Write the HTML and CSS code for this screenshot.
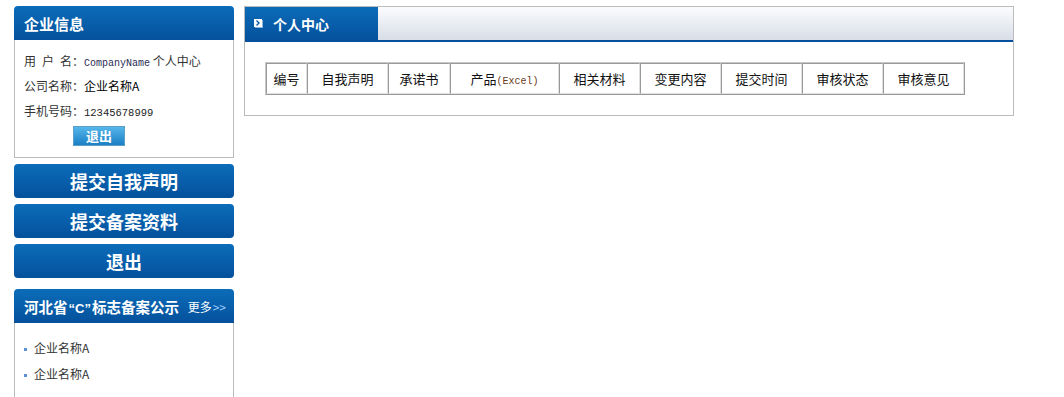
FILE: index.html
```html
<!DOCTYPE html>
<html lang="zh-CN">
<head>
    <meta charset="UTF-8">
    <title>个人中心</title>
    <link rel="stylesheet" href="styles.css">
</head>
<body>

<div class="wrap">
    <div class="sidebar">
        <div class="box-title">企业信息</div>
        <div class="info-box">
            <div class="info-row">用&ensp;户&ensp;名：<span class="mono">CompanyName</span>&nbsp;个人中心</div>
            <div class="info-row">公司名称：<span class="dark">企业名称A</span></div>
            <div class="info-row">手机号码：<span class="num">12345678999</span></div>
            <div class="info-btn"><a href="#" class="small-btn">退出</a></div>
        </div>

        <a href="#" class="side-btn">提交自我声明</a>
        <a href="#" class="side-btn">提交备案资料</a>
        <a href="#" class="side-btn">退出</a>

        <div class="box-title box-title-gap">
            <span class="title-text">河北省<span class="q">“C”</span>标志备案公示</span>
            <a href="#" class="more">更多<span class="arrows">&gt;&gt;</span></a>
        </div>
        <ul class="list-box">
            <li>企业名称A</li>
            <li>企业名称A</li>
        </ul>
    </div>

    <div class="main">
        <div class="main-head">
            <div class="tab">
                <svg class="tab-icon" width="9" height="9" viewBox="0 0 9 9">
                    <rect x="1" y="1" width="8" height="8" fill="#8fb4dc"/>
                    <rect x="0" y="0" width="8" height="8" fill="#fff"/>
                    <path d="M2.5 1.5 L5 4 L2.5 6.5" stroke="#0a5aa8" stroke-width="1.4" fill="none"/>
                </svg>
                个人中心
            </div>
        </div>
        <div class="main-body">
            <table class="grid">
                <tr>
                    <td class="c1">编号</td>
                    <td class="c2">自我声明</td>
                    <td class="c3">承诺书</td>
                    <td class="c4">产品<span class="excel">(Excel)</span></td>
                    <td class="c5">相关材料</td>
                    <td class="c5">变更内容</td>
                    <td class="c5">提交时间</td>
                    <td class="c5">审核状态</td>
                    <td class="c5">审核意见</td>
                </tr>
            </table>
        </div>
    </div>
</div>

</body>
</html>
```

FILE: styles.css
```css
body {
    margin: 0;
    padding: 0;
    background-color: #fff;
    font-family: "Noto Sans CJK SC", "Liberation Sans", sans-serif;
    font-size: 12px;
    color: #222;
}
a {
    text-decoration: none;
}
.wrap {
    display: flex;
    align-items: flex-start;
    gap: 10px;
    padding: 6px 14px 0 14px;
}

/* Sidebar */
.sidebar {
    width: 220px;
    flex-shrink: 0;
}
.box-title {
    height: 34px;
    display: flex;
    align-items: center;
    justify-content: space-between;
    padding: 0 10px 0 10px;
    border-radius: 4px 4px 0 0;
    background: linear-gradient(#0b6cb9, #05519c);
    color: #fff;
    font-size: 15px;
    font-weight: bold;
    box-sizing: border-box;
    white-space: nowrap;
}
.box-title-gap {
    margin-top: 11px;
    padding-right: 8px;
    gap: 4px;
}
.title-text {
    font-size: 14.5px;
}
.q {
    font-family: "Liberation Sans", sans-serif;
    font-size: 13px;
    margin: 0 1px;
}
.more {
    color: #fff;
    font-size: 12px;
    font-weight: normal;
}
.arrows {
    color: #9fd0ff;
    margin-left: 1px;
}
.info-box {
    border: 1px solid #bbb;
    border-top: none;
    height: 118px;
    padding: 8px 0 0 9px;
    box-sizing: border-box;
}
.info-row {
    height: 25px;
    line-height: 25px;
    color: #333;
}
.mono {
    font-family: "Liberation Mono", monospace;
    font-size: 10px;
    color: #2b2b55;
}
.num {
    font-family: "Liberation Mono", monospace;
    font-size: 10.5px;
    color: #222;
}
.dark {
    color: #000;
}
.info-btn {
    padding: 3px 0 0 49px;
}
.small-btn {
    display: inline-block;
    width: 50px;
    height: 18px;
    line-height: 18px;
    text-align: center;
    border: 1px solid #5c9fc8;
    background: linear-gradient(#55b6ea, #1a7fc4);
    color: #fff;
    font-weight: bold;
    font-size: 13px;
}
.side-btn {
    display: block;
    height: 34px;
    line-height: 34px;
    margin-top: 6px;
    border-radius: 4px;
    background: linear-gradient(#0b6cb9, #05519c);
    color: #fff;
    text-align: center;
    font-size: 18px;
    font-weight: bold;
}
.list-box {
    list-style: none;
    margin: 0;
    padding: 12px 0 20px 9px;
    border: 1px solid #bbb;
    border-top: none;
}
.list-box li {
    height: 26px;
    line-height: 26px;
    color: #333;
}
.list-box li:before {
    content: "";
    display: inline-block;
    width: 3px;
    height: 3px;
    background-color: #5b8fd6;
    margin-right: 7px;
    vertical-align: middle;
}

/* Main panel */
.main {
    width: 770px;
    border: 1px solid #bbb;
    box-sizing: border-box;
}
.main-head {
    height: 33px;
    background: linear-gradient(#fbfcfd, #d8dee7);
    border-bottom: 2px solid #04509d;
    display: flex;
}
.tab {
    width: 133px;
    height: 33px;
    display: flex;
    align-items: center;
    gap: 10px;
    padding-left: 9px;
    box-sizing: border-box;
    background: linear-gradient(#0b6cb9, #05519c);
    color: #fff;
    font-size: 14px;
    font-weight: bold;
}
.tab-icon {
    flex-shrink: 0;
}
.main-body {
    padding: 20px 0 20px 20px;
}
.grid {
    border-collapse: separate;
    border-spacing: 0;
    border: 1px solid;
    border-color: #c8c8c8 #999 #999 #c8c8c8;
    height: 33px;
}
.grid td {
    border: 1px solid;
    border-color: #999 #e0e0e0 #e0e0e0 #999;
    text-align: center;
    font-size: 13px;
    color: #111;
    padding: 0;
}
.c1 { width: 39px; }
.c2 { width: 79px; }
.c3 { width: 60px; }
.c4 { width: 107px; }
.c5 { width: 79px; }
.excel {
    font-family: "Liberation Mono", monospace;
    font-size: 10px;
    color: #6b3a1a;
}
```
